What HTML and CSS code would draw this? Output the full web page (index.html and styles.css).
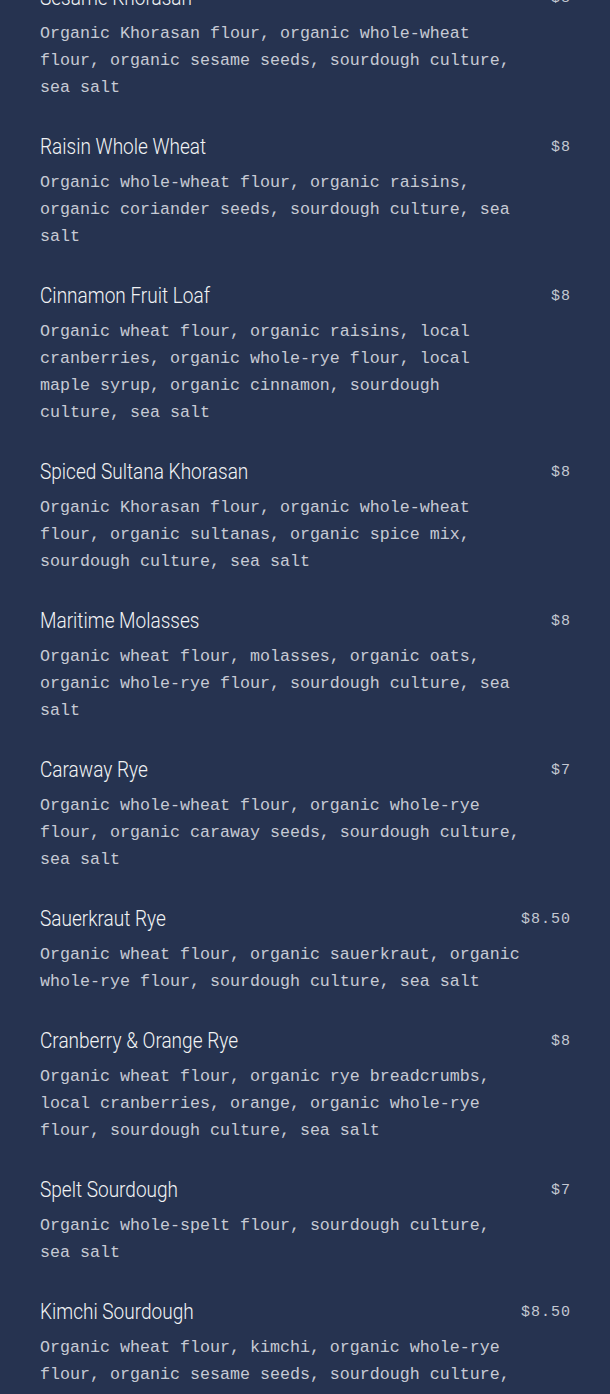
FILE: index.html
```html
<!DOCTYPE html>
<html>
<head>
<meta charset="utf-8">
<link rel="stylesheet" href="styles.css">
</head>
<body>
<main class="menu">
  <section class="item">
    <div class="head"><h3 class="name">Sesame Khorasan</h3><span class="price">$8</span></div>
    <p class="desc">Organic Khorasan flour, organic whole-wheat flour, organic sesame seeds, sourdough culture, sea salt</p>
  </section>
  <section class="item">
    <div class="head"><h3 class="name">Raisin Whole Wheat</h3><span class="price">$8</span></div>
    <p class="desc">Organic whole-wheat flour, organic raisins, organic coriander seeds, sourdough culture, sea salt</p>
  </section>
  <section class="item">
    <div class="head"><h3 class="name">Cinnamon Fruit Loaf</h3><span class="price">$8</span></div>
    <p class="desc">Organic wheat flour, organic raisins, local cranberries, organic whole-rye flour, local maple syrup, organic cinnamon, sourdough culture, sea salt</p>
  </section>
  <section class="item">
    <div class="head"><h3 class="name">Spiced Sultana Khorasan</h3><span class="price">$8</span></div>
    <p class="desc">Organic Khorasan flour, organic whole-wheat flour, organic sultanas, organic spice mix, sourdough culture, sea salt</p>
  </section>
  <section class="item">
    <div class="head"><h3 class="name">Maritime Molasses</h3><span class="price">$8</span></div>
    <p class="desc">Organic wheat flour, molasses, organic oats, organic whole-rye flour, sourdough culture, sea salt</p>
  </section>
  <section class="item">
    <div class="head"><h3 class="name">Caraway Rye</h3><span class="price">$7</span></div>
    <p class="desc">Organic whole-wheat flour, organic whole-rye flour, organic caraway seeds, sourdough culture, sea salt</p>
  </section>
  <section class="item">
    <div class="head"><h3 class="name">Sauerkraut Rye</h3><span class="price">$8.50</span></div>
    <p class="desc">Organic wheat flour, organic sauerkraut, organic whole-rye flour, sourdough culture, sea salt</p>
  </section>
  <section class="item">
    <div class="head"><h3 class="name">Cranberry &amp; Orange Rye</h3><span class="price">$8</span></div>
    <p class="desc">Organic wheat flour, organic rye breadcrumbs, local cranberries, orange, organic whole-rye flour, sourdough culture, sea salt</p>
  </section>
  <section class="item">
    <div class="head"><h3 class="name">Spelt Sourdough</h3><span class="price">$7</span></div>
    <p class="desc">Organic whole-spelt flour, sourdough culture, sea salt</p>
  </section>
  <section class="item">
    <div class="head"><h3 class="name">Kimchi Sourdough</h3><span class="price">$8.50</span></div>
    <p class="desc">Organic wheat flour, kimchi, organic whole-rye flour, organic sesame seeds, sourdough culture, sea salt</p>
  </section>
</main>
</body>
</html>
```
FILE: styles.css
```css
html, body {
  margin: 0;
  padding: 0;
  background: #263350;
}
.menu {
  display: flex;
  flex-direction: column;
  gap: 31px;
  padding: 0 40px;
  margin-top: -17px;
}
.item {
  display: flex;
  flex-direction: column;
  gap: 7px;
}
.head {
  display: flex;
  justify-content: space-between;
  align-items: center;
  height: 30px;
}
.name {
  margin: 0;
  font-family: Roboto, "DejaVu Sans", sans-serif;
  font-weight: 300;
  font-size: 22px;
  line-height: 30px;
  color: #f2f3f5;
  transform: scaleX(0.865);
  transform-origin: left center;
}
.price {
  font-family: "Liberation Mono", monospace;
  font-size: 15px;
  letter-spacing: 1px;
  color: #c4c8d2;
  margin-right: -1px;
}
.desc {
  margin: 0;
  max-width: 485px;
  font-family: "Liberation Mono", monospace;
  font-size: 16.67px;
  line-height: 27px;
  color: #c6cad4;
}
```
